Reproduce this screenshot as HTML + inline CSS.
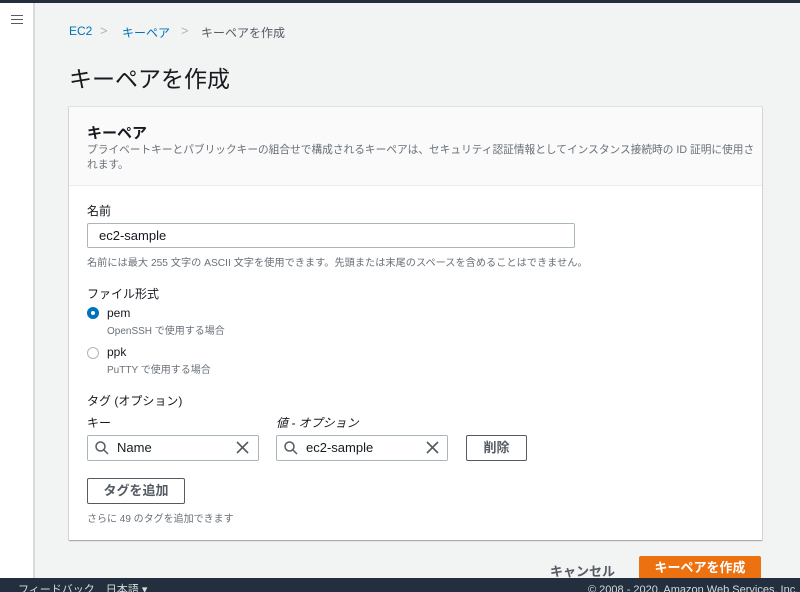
<!DOCTYPE html>
<html><head><meta charset="utf-8"><style>
*{margin:0;padding:0;box-sizing:border-box}
html,body{width:800px;height:592px;overflow:hidden}
body{background:#f2f3f3;font-family:"Liberation Sans","Noto Sans CJK JP",sans-serif;color:#16191f;position:relative}
.a{position:absolute;white-space:nowrap}
.inp{position:absolute;background:#fff;border:1px solid #aab7b8;border-radius:2px;font-size:13px;padding-left:11px;line-height:24px}
.btn{position:absolute;background:#fff;border:1px solid #545b64;border-radius:2px;font-size:13px;font-weight:bold;color:#545b64;text-align:center}
.s{font-size:10px;color:#687078}
</style></head><body>
<div class="a" style="left:0;top:0;width:800px;height:3px;background:#232f3e"></div>
<div class="a" style="left:0;top:3px;width:35px;height:589px;background:#fff;border-right:2px solid #d5dbdb"></div>
<div class="a" style="left:11px;top:15px;width:12px;height:9px;border-top:1.5px solid #545b64;border-bottom:1.5px solid #545b64"><div style="margin-top:3px;border-top:1.5px solid #545b64"></div></div>
<div class="a" style="left:69px;top:24px;font-size:12px;color:#0073bb">EC2</div>
<div class="a" style="left:100px;top:23px;font-size:13px;color:#aab7b8">&gt;</div>
<div class="a" style="left:122px;top:24px;font-size:12px;color:#0073bb">キーペア</div>
<div class="a" style="left:181px;top:23px;font-size:13px;color:#aab7b8">&gt;</div>
<div class="a" style="left:201px;top:24px;font-size:12px;color:#545b64">キーペアを作成</div>
<div class="a" style="left:69px;top:60px;font-size:23px;color:#16191f">キーペアを作成</div>

<div class="a" style="left:69px;top:107px;width:693px;height:433px;background:#fff;box-shadow:0 1px 1px rgba(0,0,0,.3),0 0 0 1px #e0e0e0"></div>
<div class="a" style="left:69px;top:107px;width:693px;height:79px;background:#fafafa;border-bottom:1px solid #eaeded"></div>
<div class="a" style="left:87px;top:122px;font-size:15px;font-weight:bold">キーペア</div>
<div class="a s" style="left:87px;top:143px;line-height:15px;font-size:10.7px">プライベートキーとパブリックキーの組合せで構成されるキーペアは、セキュリティ認証情報としてインスタンス接続時の ID 証明に使用さ<br>れます。</div>

<div class="a" style="left:87px;top:202px;font-size:12px">名前</div>
<div class="inp" style="left:87px;top:223px;width:488px;height:25px">ec2-sample</div>
<div class="a s" style="left:87px;top:254px;font-size:10.2px">名前には最大 255 文字の ASCII 文字を使用できます。先頭または末尾のスペースを含めることはできません。</div>

<div class="a" style="left:87px;top:285px;font-size:12px">ファイル形式</div>
<div class="a" style="left:87px;top:307px;width:12px;height:12px;border-radius:50%;border:4px solid #0073bb;background:#fff"></div>
<div class="a" style="left:107px;top:306px;font-size:12px">pem</div>
<div class="a s" style="left:107px;top:322px">OpenSSH で使用する場合</div>
<div class="a" style="left:87px;top:347px;width:12px;height:12px;border-radius:50%;border:1px solid #aab7b8;background:#fff"></div>
<div class="a" style="left:107px;top:345px;font-size:12px">ppk</div>
<div class="a s" style="left:107px;top:361px">PuTTY で使用する場合</div>

<div class="a" style="left:87px;top:392px;font-size:12px">タグ (オプション)</div>
<div class="a" style="left:87px;top:414px;font-size:12px">キー</div>
<div class="a" style="left:276px;top:414px;font-size:12px;font-style:italic">値 - オプション</div>

<div class="inp" style="left:87px;top:435px;width:172px;height:26px;padding-left:29px">Name</div>
<svg class="a" style="left:95px;top:441px" width="14" height="14" viewBox="0 0 14 14"><circle cx="5.5" cy="5.5" r="4.5" fill="none" stroke="#545b64" stroke-width="1.5"/><path d="M9 9l4 4" stroke="#545b64" stroke-width="1.5"/></svg>
<svg class="a" style="left:236px;top:441px" width="13" height="13" viewBox="0 0 13 13"><path d="M1 1l11 11M12 1L1 12" stroke="#545b64" stroke-width="1.6"/></svg>

<div class="inp" style="left:276px;top:435px;width:172px;height:26px;padding-left:29px">ec2-sample</div>
<svg class="a" style="left:284px;top:441px" width="14" height="14" viewBox="0 0 14 14"><circle cx="5.5" cy="5.5" r="4.5" fill="none" stroke="#545b64" stroke-width="1.5"/><path d="M9 9l4 4" stroke="#545b64" stroke-width="1.5"/></svg>
<svg class="a" style="left:426px;top:441px" width="13" height="13" viewBox="0 0 13 13"><path d="M1 1l11 11M12 1L1 12" stroke="#545b64" stroke-width="1.6"/></svg>

<div class="btn" style="left:466px;top:435px;width:61px;height:26px;line-height:24px">削除</div>
<div class="btn" style="left:87px;top:478px;width:98px;height:26px;line-height:24px">タグを追加</div>
<div class="a s" style="left:87px;top:510px">さらに 49 のタグを追加できます</div>

<div class="a" style="left:550px;top:561px;font-size:13px;font-weight:bold;color:#545b64">キャンセル</div>
<div class="a" style="left:639px;top:556px;width:122px;height:26px;background:#ec7211;border-radius:2px;color:#fff;font-size:13px;font-weight:bold;text-align:center;line-height:24px">キーペアを作成</div>

<div class="a" style="left:0;top:578px;width:800px;height:14px;overflow:hidden;background:#232f3e;color:#d5dbdb;font-size:11px;line-height:24px;padding-left:18px">フィードバック　日本語 ▾<span style="position:absolute;left:588px">© 2008 - 2020, Amazon Web Services, Inc. または</span></div>
</body></html>
